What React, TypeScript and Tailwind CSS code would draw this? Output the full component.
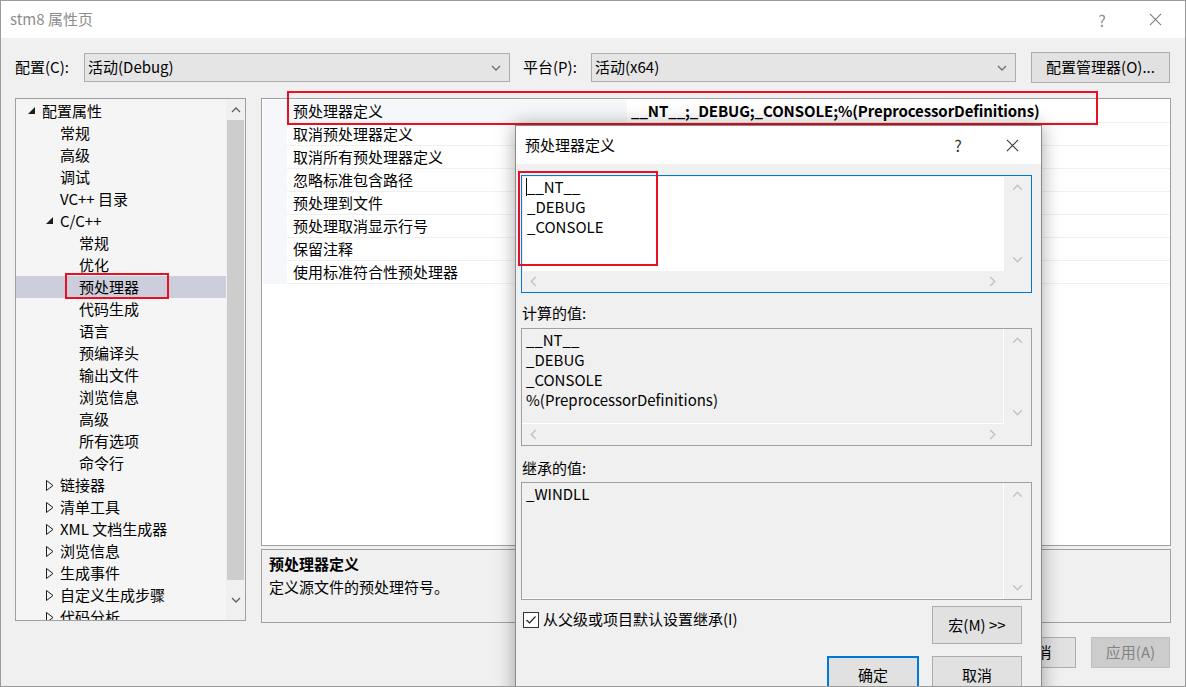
import React from 'react'

const font = "font-['Noto_Sans_CJK_SC','Noto_Sans',sans-serif]"

function Chevron({ dir, color = '#606060', size = 10 }: { dir: 'up' | 'down' | 'left' | 'right'; color?: string; size?: number }) {
  const d = {
    up: 'M1 7 L5 3 L9 7',
    down: 'M1 3 L5 7 L9 3',
    left: 'M7 1 L3 5 L7 9',
    right: 'M3 1 L7 5 L3 9',
  }[dir]
  return (
    <svg width={size} height={size} viewBox="0 0 10 10" fill="none">
      <path d={d} stroke={color} strokeWidth="1.3" />
    </svg>
  )
}

function Expanded() {
  return (
    <svg width="8" height="8" viewBox="0 0 8 8" className="shrink-0">
      <polygon points="7,0 7,7 0,7" fill="#1e1e1e" />
    </svg>
  )
}

function Collapsed() {
  return (
    <svg width="8" height="11" viewBox="0 0 8 11" className="shrink-0">
      <polygon points="0.5,0.5 7,5.5 0.5,10.5" fill="none" stroke="#1e1e1e" strokeWidth="1" />
    </svg>
  )
}

function CloseX({ color = '#555', size = 14 }: { color?: string; size?: number }) {
  return (
    <svg width={size} height={size} viewBox="0 0 14 14">
      <path d="M1 1 L13 13 M13 1 L1 13" stroke={color} strokeWidth="1.1" />
    </svg>
  )
}

type TreeItem = { label: string; level: number; kind: 'open' | 'closed' | 'leaf'; selected?: boolean }

const tree: TreeItem[] = [
  { label: '配置属性', level: 0, kind: 'open' },
  { label: '常规', level: 1, kind: 'leaf' },
  { label: '高级', level: 1, kind: 'leaf' },
  { label: '调试', level: 1, kind: 'leaf' },
  { label: 'VC++ 目录', level: 1, kind: 'leaf' },
  { label: 'C/C++', level: 1, kind: 'open' },
  { label: '常规', level: 2, kind: 'leaf' },
  { label: '优化', level: 2, kind: 'leaf' },
  { label: '预处理器', level: 2, kind: 'leaf', selected: true },
  { label: '代码生成', level: 2, kind: 'leaf' },
  { label: '语言', level: 2, kind: 'leaf' },
  { label: '预编译头', level: 2, kind: 'leaf' },
  { label: '输出文件', level: 2, kind: 'leaf' },
  { label: '浏览信息', level: 2, kind: 'leaf' },
  { label: '高级', level: 2, kind: 'leaf' },
  { label: '所有选项', level: 2, kind: 'leaf' },
  { label: '命令行', level: 2, kind: 'leaf' },
  { label: '链接器', level: 1, kind: 'closed' },
  { label: '清单工具', level: 1, kind: 'closed' },
  { label: 'XML 文档生成器', level: 1, kind: 'closed' },
  { label: '浏览信息', level: 1, kind: 'closed' },
  { label: '生成事件', level: 1, kind: 'closed' },
  { label: '自定义生成步骤', level: 1, kind: 'closed' },
  { label: '代码分析', level: 1, kind: 'closed' },
]

const indent = ['pl-[26px]', 'pl-[44px]', 'pl-[63px]']

const props = [
  '预处理器定义',
  '取消预处理器定义',
  '取消所有预处理器定义',
  '忽略标准包含路径',
  '预处理到文件',
  '预处理取消显示行号',
  '保留注释',
  '使用标准符合性预处理器',
]

function Combo({ text, width }: { text: string; width: string }) {
  return (
    <div className={`${width} h-[29px] border border-[#adadad] bg-[#e5e5e5] flex items-center pl-[3px] pr-[8px]`}>
      <span className="flex-1">{text}</span>
      <Chevron dir="down" color="#707070" size={10} />
    </div>
  )
}

function ListBox({ lines, hscroll, focused }: { lines: string[]; hscroll?: boolean; focused?: boolean }) {
  return (
    <div
      className={`w-[511px] h-[118px] border flex flex-col ${
        focused ? 'border-[#0078d7] bg-[#f0f0f0]' : 'border-[#a0a0a0] bg-[#f0f0f0]'
      }`}
    >
      <div className="flex flex-1 min-h-0">
        <div
          className={`flex-1 pl-[4px] leading-[20px] ${
            focused ? 'bg-white ml-px mt-px' : 'pt-px border-r border-b border-white'
          }`}
        >
          {lines.map((l, i) => (
            <div key={i} className="flex items-center">
              {focused && i === 0 && <span className="w-px h-[18px] bg-black -ml-[1px]" />}
              <span>{l}</span>
            </div>
          ))}
        </div>
        <div className="w-[27px] flex flex-col items-center justify-between py-[6px]">
          <Chevron dir="up" color="#c2c2c2" size={11} />
          <Chevron dir="down" color="#c2c2c2" size={11} />
        </div>
      </div>
      {hscroll && (
        <div className="h-[21px] flex items-center justify-between pl-[6px] pr-[33px]">
          <Chevron dir="left" color="#c2c2c2" size={11} />
          <Chevron dir="right" color="#c2c2c2" size={11} />
        </div>
      )}
    </div>
  )
}

export default function App() {
  return (
    <div className={`relative w-[1186px] h-[687px] overflow-hidden bg-[#f0f0f0] border border-[#9a9a9a] text-[15px] text-black ${font}`}>
      {/* Title bar */}
      <div className="h-[37px] bg-white flex items-center pl-[9px] text-[#8c8c8c]">
        <span className="flex-1 text-[15px]">stm8 属性页</span>
        <span className="w-[20px] text-center text-[16px] text-[#8c8c8c] mr-[37px]">?</span>
        <span className="mr-[23px]">
          <CloseX color="#7a7a7a" size={13} />
        </span>
      </div>

      {/* Config row */}
      <div className="flex items-center h-[31px] mt-[14px] pl-[14px]">
        <span className="w-[69px]">配置(C):</span>
        <Combo text="活动(Debug)" width="w-[426px]" />
        <span className="ml-[13px] w-[68px]">平台(P):</span>
        <Combo text="活动(x64)" width="w-[425px]" />
        <div className="ml-[15px] w-[139px] h-[31px] border border-[#adadad] bg-[#e1e1e1] flex items-center justify-center">
          配置管理器(O)...
        </div>
      </div>

      {/* Main area */}
      <div className="flex mt-[15px] pl-[14px] gap-[15px]">
        {/* Tree */}
        <div className="w-[231px] h-[523px] border border-[#a0a0a0] bg-[#f5f5f5] flex overflow-hidden">
          <div className="flex-1 pt-px overflow-hidden">
            {tree.map((t, i) => (
              <div
                key={i}
                className={`h-[22px] flex items-center ${indent[t.level]} ${t.selected ? 'bg-[#cccedb]' : ''}`}
              >
                <span className="w-[14px] -ml-[14px] flex items-center">
                  {t.kind === 'open' && <Expanded />}
                  {t.kind === 'closed' && <Collapsed />}
                </span>
                <span className="whitespace-nowrap leading-[22px]">{t.label}</span>
              </div>
            ))}
          </div>
          <div className="w-[19px] bg-[#f0f0f0] flex flex-col items-center">
            <div className="h-[21px] flex items-center justify-center">
              <Chevron dir="up" color="#606060" size={10} />
            </div>
            <div className="w-[17px] h-[460px] bg-[#cdcdcd]" />
            <div className="flex-1 flex items-center justify-center">
              <Chevron dir="down" color="#606060" size={10} />
            </div>
          </div>
        </div>

        {/* Right side */}
        <div className="w-[910px] flex flex-col gap-[3px]">
          <div className="h-[448px] border border-[#a0a0a0] bg-white pt-px pl-px">
            {props.map((p, i) => (
              <div key={i} className="flex h-[23px]">
                <div className="w-[24px] bg-[#f5f7fa]" />
                <div
                  className={`w-[340px] pl-[6px] flex items-center border-b border-[#f0f0f0] ${
                    i === 0 ? 'bg-[#f5f7fa]' : ''
                  }`}
                >
                  {p}
                </div>
                <div className="flex-1 pl-[4px] flex items-center border-b border-[#f0f0f0] font-bold tracking-[-0.1px]">
                  {i === 0 ? '__NT__;_DEBUG;_CONSOLE;%(PreprocessorDefinitions)' : ''}
                </div>
              </div>
            ))}
          </div>
          <div className="h-[74px] border border-[#a0a0a0] bg-[#f0f0f0] pl-[7px] pt-[2px] leading-[23px]">
            <div className="font-bold">预处理器定义</div>
            <div>定义源文件的预处理符号。</div>
          </div>
        </div>
      </div>

      {/* Bottom buttons */}
      <div className="flex justify-end gap-[15px] mt-[14px] pr-[15px]">
        {['确定', '取消'].map((b) => (
          <div key={b} className="w-[79px] h-[31px] border border-[#adadad] bg-[#e1e1e1] flex items-center justify-center">
            {b}
          </div>
        ))}
        <div className="w-[79px] h-[31px] border border-[#bfbfbf] bg-[#cccccc] text-[#838383] flex items-center justify-center">
          应用(A)
        </div>
      </div>

      {/* Highlight boxes */}
      <div className="absolute left-[286px] top-[90px] w-[811px] h-[34px] border-2 border-[#e81123]" />
      <div className="absolute left-[64px] top-[272px] w-[104px] h-[26px] border-2 border-[#e81123]" />

      {/* Dialog */}
      <div className="absolute left-[514px] top-[124px] w-[527px] h-[580px] border border-[#8a8a8a] bg-[#f0f0f0] shadow-[0_0_18px_rgba(0,0,0,0.35)]">
        <div className="h-[38px] bg-white flex items-center pl-[9px]">
          <span className="flex-1">预处理器定义</span>
          <span className="w-[20px] text-center text-[16px] text-[#333] mr-[38px]">?</span>
          <span className="mr-[22px]">
            <CloseX color="#333" size={13} />
          </span>
        </div>
        <div className="pl-[5px]">
          <div className="mt-[11px]">
            <ListBox lines={['__NT__', '_DEBUG', '_CONSOLE']} hscroll focused />
          </div>
          <div className="mt-[10px] h-[20px] leading-[20px] pl-px">计算的值:</div>
          <div className="mt-[5px]">
            <ListBox lines={['__NT__', '_DEBUG', '_CONSOLE', '%(PreprocessorDefinitions)']} hscroll />
          </div>
          <div className="mt-[12px] h-[20px] leading-[20px] pl-px">继承的值:</div>
          <div className="mt-[4px]">
            <ListBox lines={['_WINDLL']} />
          </div>
          <div className="flex mt-[6px] pr-[19px]">
            <div className="flex items-center mt-[5px] ml-[2px] h-[17px]">
              <div className="w-[16px] h-[16px] border border-[#333] bg-white flex items-center justify-center">
                <svg width="12" height="12" viewBox="0 0 12 12">
                  <path d="M1.5 6 L4.5 9 L10.5 2.5" stroke="#222" strokeWidth="1.2" fill="none" />
                </svg>
              </div>
              <span className="ml-[4px]">从父级或项目默认设置继承(I)</span>
            </div>
            <div className="ml-auto w-[90px] h-[38px] border border-[#adadad] bg-[#e1e1e1] flex items-center justify-center">
              宏(M) &gt;&gt;
            </div>
          </div>
          <div className="flex justify-end gap-[13px] mt-[12px] pr-[19px]">
            <div className="w-[92px] h-[38px] border-2 border-[#0078d7] bg-[#e1e1e1] flex items-center justify-center">
              确定
            </div>
            <div className="w-[90px] h-[38px] border border-[#adadad] bg-[#e1e1e1] flex items-center justify-center">
              取消
            </div>
          </div>
        </div>
      </div>
      <div className="absolute left-[517px] top-[170px] w-[140px] h-[95px] border-2 border-[#e81123]" />
    </div>
  )
}
